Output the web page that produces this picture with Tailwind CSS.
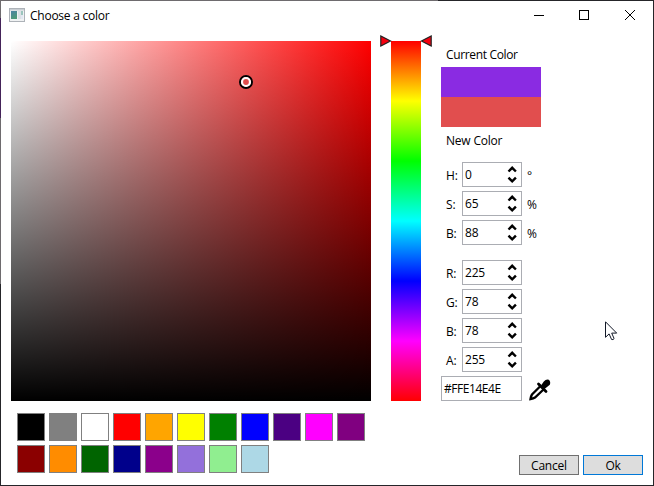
<!DOCTYPE html>
<html lang="en">
<head>
<meta charset="utf-8">
<title>Choose a color</title>
<script src="https://cdn.jsdelivr.net/npm/@tailwindcss/browser@4"></script>
</head>
<body class="bg-white">
<div class="relative flex h-[486px] w-[654px] flex-col border border-[#252529] bg-white font-['Open_Sans','Noto_Sans',sans-serif] text-[12px] leading-4 tracking-[-0.2px] text-black">
  <div class="absolute -top-px -left-px h-px w-[438px] bg-[#6e6b6e]"></div>
  <div class="absolute -top-px -left-px h-[19px] w-px bg-[#6e6b6e]"></div>
  <div class="absolute top-[17px] -left-px h-[100px] w-px bg-[#442359]"></div>
  <div class="absolute top-[117px] -left-px h-[166px] w-px bg-[#6e6b6e]"></div>

  <header class="flex h-[30px] shrink-0 items-center pl-2">
    <svg class="-mt-0.5 h-[14px] w-4" viewBox="0 0 16 14">
      <defs><linearGradient id="app" x2="0.4" y2="1"><stop stop-color="#4d83a5"/><stop offset="1" stop-color="#4f9a78"/></linearGradient></defs>
      <rect x=".5" y=".5" width="15" height="13" fill="#f0f2f3" stroke="#adb2b8"/>
      <rect x="1" y="1" width="14" height="1.5" fill="#c9ced3"/>
      <rect x="2" y="3" width="6" height="8" fill="url(#app)"/>
      <rect x="9" y="3" width="3" height="8" fill="#dce1e5"/>
      <rect x="12" y="3" width="2" height="4" fill="#9bc5bd"/>
      <rect x="12" y="7" width="2" height="4" fill="#e3e7f2"/>
    </svg>
    <span class="ml-[5px] tracking-[-0.25px]">Choose a color</span>
    <div class="ml-auto flex">
      <svg class="h-[30px] w-[46px]" viewBox="0 0 46 30"><path d="M19 14.5h10" stroke="#000"/></svg>
      <svg class="h-[30px] w-[46px]" viewBox="0 0 46 30"><rect x="18.5" y="9.500" width="9" height="9" fill="none" stroke="#000"/></svg>
      <svg class="h-[30px] w-[46px]" viewBox="0 0 46 30"><path d="M18 9l10 10M28 9l-10 10" stroke="#000"/></svg>
    </div>
  </header>

  <div class="flex grow pt-[10px] pl-[10px]">
    <div class="w-[360px]">
      <div class="relative h-[360px] bg-[linear-gradient(to_bottom,transparent,#000),linear-gradient(to_right,#fff,#f00)]">
        <svg class="absolute top-[34px] left-[228px] size-[14px]" viewBox="0 0 14 14"><circle cx="7" cy="7" r="6" fill="none" stroke="#000" stroke-width="2"/><circle cx="7" cy="7" r="4" fill="#e14e4e" stroke="#fff" stroke-width="2.200"/></svg>
      </div>
      <div class="mt-3 ml-1.5 grid grid-cols-[repeat(11,28px)] gap-1 *:h-7 *:border *:border-[#808080]">
        <div class="bg-[#000000]"></div><div class="bg-[#808080]"></div><div class="bg-[#ffffff]"></div><div class="bg-[#ff0000]"></div><div class="bg-[#ffa500]"></div><div class="bg-[#ffff00]"></div><div class="bg-[#008000]"></div><div class="bg-[#0000ff]"></div><div class="bg-[#4b0082]"></div><div class="bg-[#ff00ff]"></div><div class="bg-[#800080]"></div>
        <div class="bg-[#8b0000]"></div><div class="bg-[#ff8c00]"></div><div class="bg-[#006400]"></div><div class="bg-[#00008b]"></div><div class="bg-[#8b008b]"></div><div class="bg-[#9370db]"></div><div class="bg-[#90ee90]"></div><div class="bg-[#add8e6]"></div>
      </div>
    </div>

    <div class="relative ml-5 h-[360px] w-[30px] bg-[linear-gradient(to_bottom,#f00,#ff0,#0f0,#0ff,#00f,#f0f,#f00)]">
      <svg class="absolute -top-[6px] -left-[11px] h-3 w-[52px]" viewBox="0 0 52 12"><path d="M.8 1v10L10.500 6zM51.200 1v10L41.500 6z" fill="#f5000f" stroke="#222" stroke-width="1.200"/></svg>
    </div>

    <div class="ml-5 flex w-[212px] flex-col">
      <div class="mt-[6px] ml-[5px] tracking-[-0.35px]">Current Color</div>
      <div class="mt-1 h-[30px] w-[100px] bg-[#8a2be2]"></div>
      <div class="h-[30px] w-[100px] bg-[#e14e4e]"></div>
      <div class="mt-[6px] ml-[5px]">New Color</div>

      <div class="mt-[13px] flex flex-col gap-1" id="hsb"></div>
      <div class="mt-[15px] flex flex-col gap-1" id="rgba"></div>
      <div class="mt-1 flex h-[25px] items-start">
        <div class="h-[25px] w-[81px] border border-[#abadb3] pt-1 pl-[2px] tracking-[-0.45px]">#FFE14E4E</div>
        <svg class="mt-0.5 ml-[6px] h-[23px] w-6" viewBox="0 0 24 23"><path d="M12 8.500L4 16.500Q3 18 2.500 21Q5.500 20.500 7 19.500L15.500 11.500" fill="#fff" stroke="#000" stroke-width="2.300"/><path d="M10.500 6L18 13.500" stroke="#000" stroke-width="2.800" stroke-linecap="round"/><path d="M13 7.500L15.800 3.500Q18 .8 20.800 1.700Q23 3.800 21.800 6.700L16.500 11Z"/></svg>
      </div>
      <div class="mt-[54px] flex gap-1 pl-[78px] text-center leading-[19px]">
        <button class="h-5 w-[60px] border border-[#707070] bg-[#dddddd]">Cancel</button>
        <button class="h-5 w-[60px] border border-[#0078d7] bg-[#dddddd]">Ok</button>
      </div>
    </div>
  </div>

  <svg class="absolute top-[320px] left-[604px] h-[21px] w-[13px]" viewBox="0 0 13 21"><path d="M.5 .8v15.500l3.600-3.400 2.500 5.600q1.500 .6 2.500-.9l-2.400-5.500h5z" fill="#fff" stroke="#111827"/></svg>
</div>
<script>
const row = ([label, value, unit]) => `
  <div class="flex h-[25px]">
    <span class="w-[21px] pt-[6px] pl-[5px]">${label}:</span>
    <div class="flex w-[60px] border border-[#abadb3]">
      <span class="grow pt-1 pl-[2px]">${value}</span>
      <svg class="h-[23px] w-[18px]" viewBox="0 0 18 23"><path d="M5.500 8.500L9.200 4.800L12.900 8.500M5.500 14.700L9.200 18.400L12.900 14.700" fill="none" stroke="#000" stroke-width="2.400"/></svg>
    </div>
    <span class="pt-[6px] pl-[5px]">${unit}</span>
  </div>`;
document.getElementById('hsb').innerHTML = [['H','0','°'],['S','65','%'],['B','88','%']].map(row).join('');
document.getElementById('rgba').innerHTML = [['R','225',''],['G','78',''],['B','78',''],['A','255','']].map(row).join('');
</script>
</body>
</html>
